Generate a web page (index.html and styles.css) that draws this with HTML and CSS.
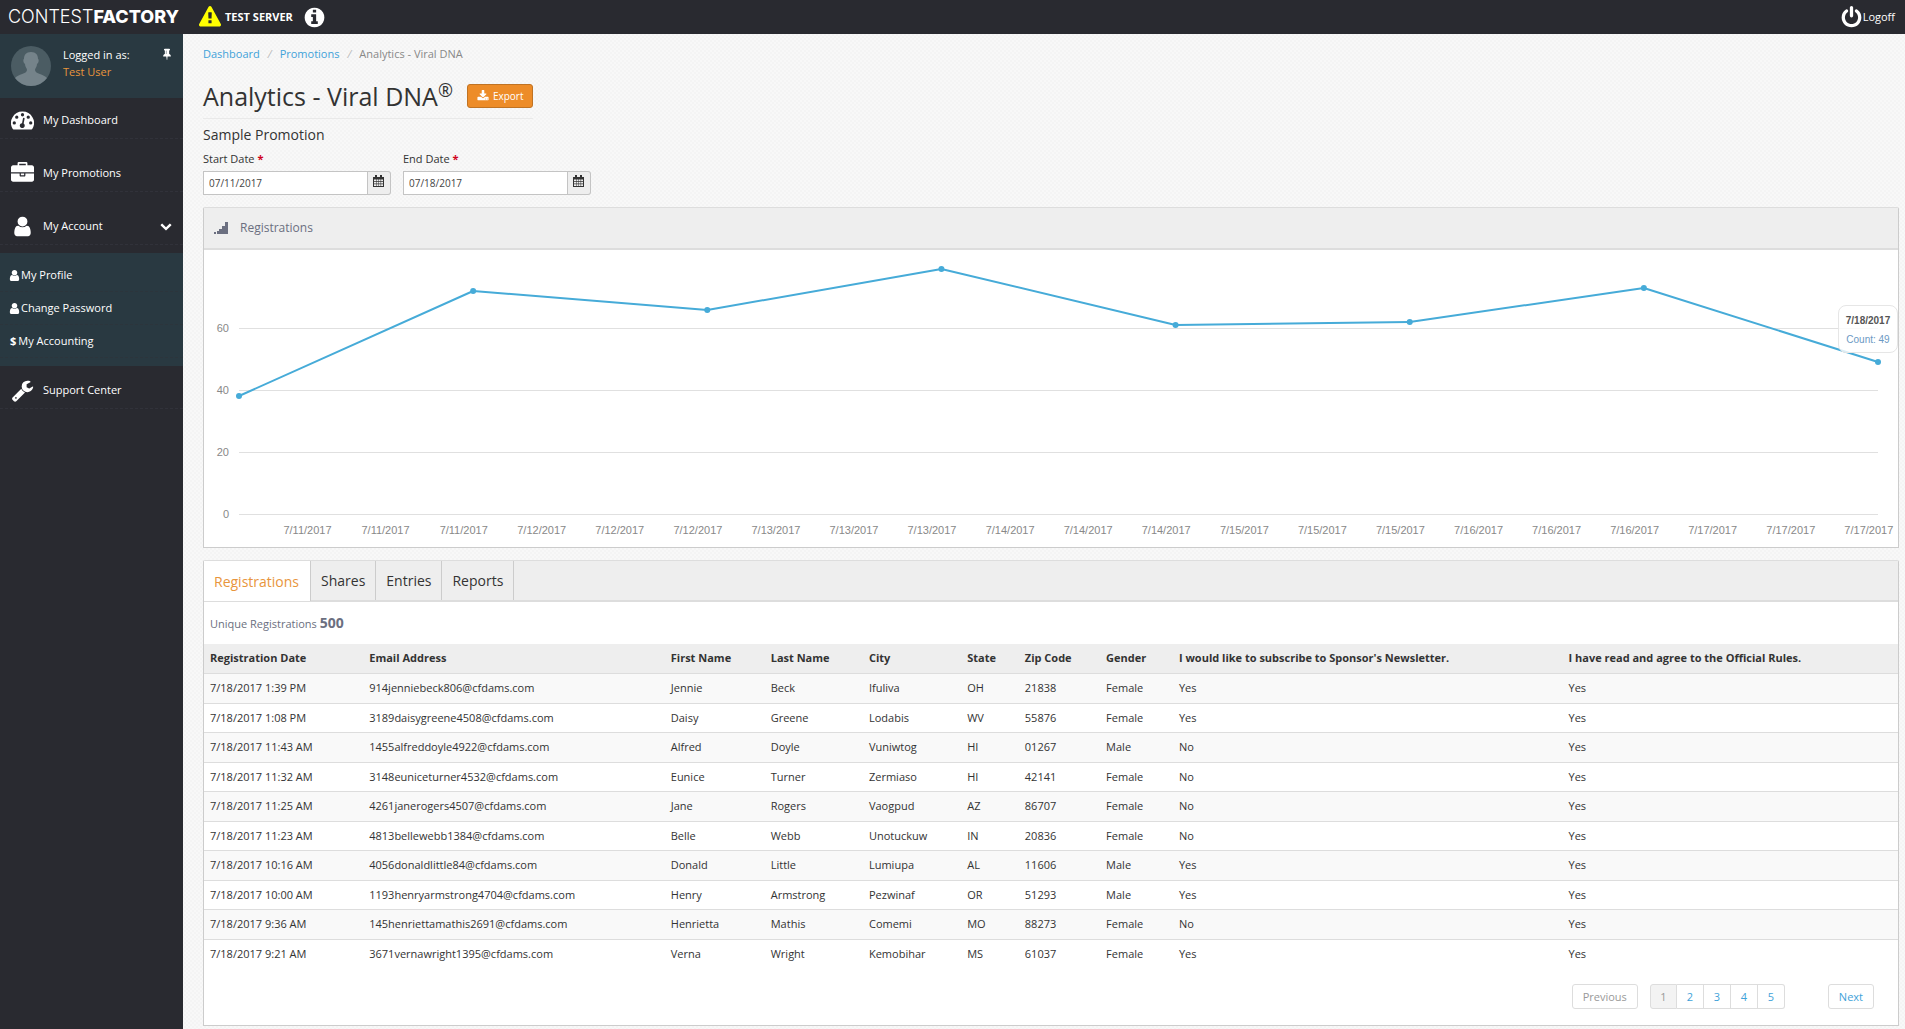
FILE: index.html
```html
<!doctype html>
<html lang="en">
<head>
  <meta charset="utf-8">
  <title>Analytics - Viral DNA</title>
  <link rel="stylesheet" href="styles.css">
</head>
<body>

  <!-- icon sprite -->
  <svg class="sprite" aria-hidden="true">
    <symbol id="i-warning" viewBox="0 0 1792 1792"><path d="M1024 1375v-190q0-14-9.500-23.500t-22.500-9.500h-192q-13 0-22.500 9.500t-9.500 23.500v190q0 14 9.500 23.500t22.500 9.500h192q13 0 22.500-9.500t9.500-23.500zm-2-374l18-459q0-12-10-19-13-11-24-11h-220q-11 0-24 11-10 7-10 21l17 457q0 10 10 16.500t24 6.500h185q14 0 23.500-6.500t10.500-16.500zm-14-934l768 1408q35 63-2 126-17 29-46.500 46t-63.500 17h-1536q-34 0-63.500-17t-46.500-46q-37-63-2-126l768-1408q17-31 47-49t65-18 65 18 47 49z"/></symbol>
    <symbol id="i-info" viewBox="0 0 1792 1792"><path d="M1152 1376v-160q0-14-9-23t-23-9h-96v-512q0-14-9-23t-23-9h-320q-14 0-23 9t-9 23v160q0 14 9 23t23 9h96v320h-96q-14 0-23 9t-9 23v160q0 14 9 23t23 9h448q14 0 23-9t9-23zm-128-896v-160q0-14-9-23t-23-9h-192q-14 0-23 9t-9 23v160q0 14 9 23t23 9h192q14 0 23-9t9-23zm640 416q0 209-103 385.500t-279.500 279.500-385.500 103-385.500-103-279.500-279.500-103-385.500 103-385.500 279.500-279.500 385.500-103 385.500 103 279.500 279.500 103 385.500z"/></symbol>
    <symbol id="i-power" viewBox="0 0 1792 1792"><path d="M1664 896q0 156-61 298t-164 245-245 164-298 61-298-61-245-164-164-245-61-298q0-182 80.500-343t226.500-270q43-32 95.500-25t83.500 50q32 42 24.500 94.500t-49.500 84.500q-98 74-151.500 181t-53.500 228q0 104 40.500 198.500t109.500 163.500 163.500 109.500 198.500 40.500 198.500-40.500 163.500-109.500 109.500-163.500 40.500-198.500q0-121-53.500-228t-151.500-181q-42-32-49.500-84.500t24.500-94.500q31-43 84-50t95 25q146 109 226.500 270t80.500 343zm-640-768v640q0 52-38 90t-90 38-90-38-38-90v-640q0-52 38-90t90-38 90 38 38 90z"/></symbol>
    <symbol id="i-pin" viewBox="0 0 1792 1792"><path d="M800 864v-448q0-14-9-23t-23-9-23 9-9 23v448q0 14 9 23t23 9 23-9 9-23zm672 352q0 26-19 45t-45 19h-429l-51 483q-2 12-10.500 20.500t-20.500 8.500h-1q-27 0-32-27l-76-485h-404q-26 0-45-19t-19-45q0-123 78.500-221.500t177.500-98.500v-512q-52 0-90-38t-38-90 38-90 90-38h640q52 0 90 38t38 90-38 90-90 38v512q99 0 177.500 98.500t78.500 221.500z"/></symbol>
    <symbol id="i-dashboard" viewBox="0 0 1792 1792"><path fill-rule="evenodd" d="M896 192a896 896 0 0 1 758 1374q-20 34-58 34H196q-38 0-58-34A896 896 0 0 1 896 192zM256 960a128 128 0 1 0 0 256 128 128 0 0 0 0-256zM448 512a128 128 0 1 0 0 256 128 128 0 0 0 0-256zM896 320a128 128 0 1 0 0 256 128 128 0 0 0 0-256zM1344 512a128 128 0 1 0 0 256 128 128 0 0 0 0-256zM1536 960a128 128 0 1 0 0 256 128 128 0 0 0 0-256zM935 721l-75 382a193 193 0 1 0 124 32l75-382q4-60-52-70-58-6-72 38z"/></symbol>
    <symbol id="i-briefcase" viewBox="0 0 1792 1792"><path d="M640 256h512v-128h-512v128zm1152 640v480q0 66-47 113t-113 47h-1472q-66 0-113-47t-47-113v-480h672v160q0 26 19 45t45 19h320q26 0 45-19t19-45v-160h672zm-768 0v128h-256v-128h256zm768-480v384h-1792v-384q0-66 47-113t113-47h352v-160q0-40 28-68t68-28h576q40 0 68 28t28 68v160h352q66 0 113 47t47 113z"/></symbol>
    <symbol id="i-user" viewBox="0 0 1792 1792"><path d="M1536 1399q0 109-62.500 187t-150.500 78h-854q-88 0-150.500-78t-62.500-187q0-85 8.500-160.500t31.500-152 58.500-131 94-89 134.500-34.500q131 128 313 128t313-128q76 0 134.500 34.500t94 89 58.500 131 31.500 152 8.500 160.500zm-256-887q0 159-112.500 271.500t-271.500 112.500-271.500-112.500-112.500-271.500 112.500-271.500 271.500-112.500 271.500 112.500 112.500 271.500z"/></symbol>
    <symbol id="i-wrench" viewBox="0 0 1792 1792"><path d="M448 1472q0-26-19-45t-45-19-45 19-19 45 19 45 45 19 45-19 19-45zm644-420l-682 682q-37 37-90 37-52 0-91-37l-106-108q-38-36-38-90 0-53 38-91l681-681q39 98 114.500 173.500t173.500 114.500zm634-435q0 39-23 106-47 134-164.500 217.500t-258.500 83.500q-185 0-316.500-131.500t-131.500-316.500 131.500-316.500 316.500-131.500q58 0 121.500 16.500t107.500 46.500q16 11 16 28t-16 28l-293 169v224l193 107q5-3 79-48.500t135.500-81 70.500-35.500q15 0 23.500 10t8.500 25z"/></symbol>
    <symbol id="i-chevron" viewBox="0 0 1792 1792"><path d="M1683 808l-742 741q-19 19-45 19t-45-19l-742-741q-19-19-19-45.500t19-45.500l166-165q19-19 45-19t45 19l531 531 531-531q19-19 45-19t45 19l166 165q19 19 19 45.500t-19 45.500z"/></symbol>
    <symbol id="i-download" viewBox="0 0 1792 1792"><path d="M1344 1344q0-26-19-45t-45-19-45 19-19 45 19 45 45 19 45-19 19-45zm256 0q0-26-19-45t-45-19-45 19-19 45 19 45 45 19 45-19 19-45zm128-224v320q0 40-28 68t-68 28h-1472q-40 0-68-28t-28-68v-320q0-40 28-68t68-28h465l135 136q58 56 136 56t136-56l136-136h464q40 0 68 28t28 68zm-325-569q17 41-14 70l-448 448q-18 19-45 19t-45-19l-448-448q-31-29-14-70 17-39 59-39h256v-448q0-26 19-45t45-19h256q26 0 45 19t19 45v448h256q42 0 59 39z"/></symbol>
    <symbol id="i-calendar" viewBox="0 0 11 12"><path fill-rule="evenodd" d="M0 2h11v10H0zM1 4.500v1.500h2v-1.500zM3.500 4.500v1.500h1.800v-1.500zM5.800 4.500v1.500h1.800v-1.500zM8.100 4.500v1.500h1.900v-1.500zM1 6.700v1.800h2v-1.800zM3.500 6.700v1.800h1.800v-1.800zM5.800 6.700v1.800h1.800v-1.800zM8.100 6.700v1.800h1.900v-1.800zM1 9.200v1.800h2v-1.800zM3.500 9.200v1.800h1.800v-1.800zM5.800 9.200v1.800h1.800v-1.800zM8.100 9.200v1.800h1.900v-1.800z"/><path d="M2 0h2v3H2zM7 0h2v3H7z"/></symbol>
    <symbol id="i-signal" viewBox="0 0 14 12"><path d="M0 10h2v2H0zM3 9h2v3H3zM5 7h3v5H5zM8 4h3v8H8zM11 0h3v12h-3z"/></symbol>
  </svg>

  <header class="topbar">
    <a href="#" class="logo"><span>CONTEST</span><b>FACTORY</b></a>
    <div class="server">
      <svg class="icon-md warning"><use href="#i-warning"/></svg>
      <strong>TEST SERVER</strong>
      <svg class="icon-lg"><use href="#i-info"/></svg>
    </div>
    <a href="#" class="logoff"><svg class="icon-lg"><use href="#i-power"/></svg>Logoff</a>
  </header>

  <div class="layout">
    <nav class="sidebar">
      <div class="userbox">
        <svg class="avatar" viewBox="0 0 40 40">
          <circle cx="20" cy="20" r="20" fill="#4b5c63"/>
          <path fill="#75838a" d="M20 6c5 0 7 3 7 7 1 0 1 4-1 5 0 3-2 4-2 6 0 4 9 4 12 8a20 20 0 0 1-32 0c3-4 12-4 12-8 0-2-2-3-2-6-2-1-2-5-1-5 0-4 2-7 7-7z"/>
        </svg>
        <div class="who">
          <div>Logged in as:</div>
          <a href="#">Test User</a>
        </div>
        <svg class="pin"><use href="#i-pin"/></svg>
      </div>
      <ul class="menu">
        <li><a href="#"><svg class="icon-lg"><use href="#i-dashboard"/></svg>My Dashboard</a></li>
        <li><a href="#"><svg class="icon-lg"><use href="#i-briefcase"/></svg>My Promotions</a></li>
        <li><a href="#"><svg class="icon-lg"><use href="#i-user"/></svg>My Account<svg class="chevron"><use href="#i-chevron"/></svg></a></li>
      </ul>
      <ul class="submenu">
        <li><a href="#"><svg class="icon-sm"><use href="#i-user"/></svg>My Profile</a></li>
        <li><a href="#"><svg class="icon-sm"><use href="#i-user"/></svg>Change Password</a></li>
        <li><a href="#"><b>$</b>My Accounting</a></li>
      </ul>
      <ul class="menu support">
        <li><a href="#"><svg class="icon-lg"><use href="#i-wrench"/></svg>Support Center</a></li>
      </ul>
    </nav>

    <main class="content">
      <div class="breadcrumb">
        <a href="#">Dashboard</a><i>/</i><a href="#">Promotions</a><i>/</i><span>Analytics - Viral DNA</span>
      </div>

      <div class="title">
        <h1>Analytics - Viral DNA<sup>®</sup></h1>
        <button type="button" class="export"><svg><use href="#i-download"/></svg>Export</button>
      </div>
      <h2>Sample Promotion</h2>

      <form class="dates">
        <div class="field">
          <label for="start">Start Date <em>*</em></label>
          <div class="picker">
            <input type="text" id="start" value="07/11/2017">
            <button type="button" aria-label="Pick start date"><svg><use href="#i-calendar"/></svg></button>
          </div>
        </div>
        <div class="field">
          <label for="end">End Date <em>*</em></label>
          <div class="picker">
            <input type="text" id="end" value="07/18/2017">
            <button type="button" aria-label="Pick end date"><svg><use href="#i-calendar"/></svg></button>
          </div>
        </div>
      </form>

      <section class="panel chart">
        <div class="panel-head"><svg><use href="#i-signal"/></svg>Registrations</div>
        <div class="plot">
          <!-- y = 264 - value * 3.1 -->
          <svg class="graph">
            <g class="grid">
              <line x1="0" x2="100%" y1="78" y2="78"/>
              <line x1="0" x2="100%" y1="140" y2="140"/>
              <line x1="0" x2="100%" y1="202" y2="202"/>
              <line x1="0" x2="100%" y1="264" y2="264"/>
            </g>
            <g class="ylabels">
              <text x="-10" y="82">60</text>
              <text x="-10" y="144">40</text>
              <text x="-10" y="206">20</text>
              <text x="-10" y="268">0</text>
            </g>
            <g class="xlabels">
              <text x="4.18%" y="284">7/11/2017</text>
              <text x="8.94%" y="284">7/11/2017</text>
              <text x="13.71%" y="284">7/11/2017</text>
              <text x="18.47%" y="284">7/12/2017</text>
              <text x="23.23%" y="284">7/12/2017</text>
              <text x="28%" y="284">7/12/2017</text>
              <text x="32.76%" y="284">7/13/2017</text>
              <text x="37.52%" y="284">7/13/2017</text>
              <text x="42.28%" y="284">7/13/2017</text>
              <text x="47.05%" y="284">7/14/2017</text>
              <text x="51.81%" y="284">7/14/2017</text>
              <text x="56.57%" y="284">7/14/2017</text>
              <text x="61.34%" y="284">7/15/2017</text>
              <text x="66.1%" y="284">7/15/2017</text>
              <text x="70.86%" y="284">7/15/2017</text>
              <text x="75.63%" y="284">7/16/2017</text>
              <text x="80.39%" y="284">7/16/2017</text>
              <text x="85.15%" y="284">7/16/2017</text>
              <text x="89.91%" y="284">7/17/2017</text>
              <text x="94.68%" y="284">7/17/2017</text>
              <text x="99.44%" y="284">7/17/2017</text>
            </g>
            <g class="series">
              <line x1="0" y1="146" x2="14.286%" y2="41"/>
              <line x1="14.286%" y1="41" x2="28.571%" y2="60"/>
              <line x1="28.571%" y1="60" x2="42.857%" y2="19"/>
              <line x1="42.857%" y1="19" x2="57.143%" y2="75"/>
              <line x1="57.143%" y1="75" x2="71.429%" y2="72"/>
              <line x1="71.429%" y1="72" x2="85.714%" y2="38"/>
              <line x1="85.714%" y1="38" x2="100%" y2="112"/>
            </g>
            <g class="dots">
              <circle cx="0" cy="146" r="3"/>
              <circle cx="14.286%" cy="41" r="3"/>
              <circle cx="28.571%" cy="60" r="3"/>
              <circle cx="42.857%" cy="19" r="3"/>
              <circle cx="57.143%" cy="75" r="3"/>
              <circle cx="71.429%" cy="72" r="3"/>
              <circle cx="85.714%" cy="38" r="3"/>
              <circle cx="100%" cy="112" r="3"/>
            </g>
          </svg>
          <div class="tooltip"><b>7/18/2017</b><span>Count: 49</span></div>
        </div>
      </section>

      <section class="panel">
        <div class="tabs" role="tablist">
          <button type="button" role="tab" class="active" aria-selected="true">Registrations</button>
          <button type="button" role="tab">Shares</button>
          <button type="button" role="tab">Entries</button>
          <button type="button" role="tab">Reports</button>
        </div>
        <p class="unique">Unique Registrations <b>500</b></p>
        <table>
          <colgroup>
            <col class="c-date"><col class="c-email"><col class="c-first"><col class="c-last"><col class="c-city"><col class="c-state"><col class="c-zip"><col class="c-gender"><col class="c-news"><col class="c-rules">
          </colgroup>
          <thead>
            <tr><th>Registration Date</th><th>Email Address</th><th>First Name</th><th>Last Name</th><th>City</th><th>State</th><th>Zip Code</th><th>Gender</th><th>I would like to subscribe to Sponsor's Newsletter.</th><th>I have read and agree to the Official Rules.</th></tr>
          </thead>
          <tbody>
            <tr><td>7/18/2017 1:39 PM</td><td>914jenniebeck806@cfdams.com</td><td>Jennie</td><td>Beck</td><td>Ifuliva</td><td>OH</td><td>21838</td><td>Female</td><td>Yes</td><td>Yes</td></tr>
            <tr><td>7/18/2017 1:08 PM</td><td>3189daisygreene4508@cfdams.com</td><td>Daisy</td><td>Greene</td><td>Lodabis</td><td>WV</td><td>55876</td><td>Female</td><td>Yes</td><td>Yes</td></tr>
            <tr><td>7/18/2017 11:43 AM</td><td>1455alfreddoyle4922@cfdams.com</td><td>Alfred</td><td>Doyle</td><td>Vuniwtog</td><td>HI</td><td>01267</td><td>Male</td><td>No</td><td>Yes</td></tr>
            <tr><td>7/18/2017 11:32 AM</td><td>3148euniceturner4532@cfdams.com</td><td>Eunice</td><td>Turner</td><td>Zermiaso</td><td>HI</td><td>42141</td><td>Female</td><td>No</td><td>Yes</td></tr>
            <tr><td>7/18/2017 11:25 AM</td><td>4261janerogers4507@cfdams.com</td><td>Jane</td><td>Rogers</td><td>Vaogpud</td><td>AZ</td><td>86707</td><td>Female</td><td>No</td><td>Yes</td></tr>
            <tr><td>7/18/2017 11:23 AM</td><td>4813bellewebb1384@cfdams.com</td><td>Belle</td><td>Webb</td><td>Unotuckuw</td><td>IN</td><td>20836</td><td>Female</td><td>No</td><td>Yes</td></tr>
            <tr><td>7/18/2017 10:16 AM</td><td>4056donaldlittle84@cfdams.com</td><td>Donald</td><td>Little</td><td>Lumiupa</td><td>AL</td><td>11606</td><td>Male</td><td>Yes</td><td>Yes</td></tr>
            <tr><td>7/18/2017 10:00 AM</td><td>1193henryarmstrong4704@cfdams.com</td><td>Henry</td><td>Armstrong</td><td>Pezwinaf</td><td>OR</td><td>51293</td><td>Male</td><td>Yes</td><td>Yes</td></tr>
            <tr><td>7/18/2017 9:36 AM</td><td>145henriettamathis2691@cfdams.com</td><td>Henrietta</td><td>Mathis</td><td>Comemi</td><td>MO</td><td>88273</td><td>Female</td><td>No</td><td>Yes</td></tr>
            <tr><td>7/18/2017 9:21 AM</td><td>3671vernawright1395@cfdams.com</td><td>Verna</td><td>Wright</td><td>Kemobihar</td><td>MS</td><td>61037</td><td>Female</td><td>Yes</td><td>Yes</td></tr>
          </tbody>
        </table>
        <div class="pager">
          <button type="button" disabled>Previous</button>
          <div class="pages">
            <button type="button" class="current">1</button>
            <button type="button">2</button>
            <button type="button">3</button>
            <button type="button">4</button>
            <button type="button">5</button>
          </div>
          <button type="button">Next</button>
        </div>
      </section>
    </main>
  </div>

</body>
</html>
```
FILE: styles.css
```css
*{
  box-sizing: border-box;
}
body{
  margin: 0;
  min-height: 100vh;
  display: flex;
  flex-direction: column;
  font-family: "Open Sans", sans-serif;
  font-size: 11px;
  line-height: 16px;
  color: #333;
  background: repeating-conic-gradient(#f4f4f4 0 25%, #f8f8f8 0 50%) 0 0 / 4px 4px;
}
a{
  color: #3fa2d9;
  text-decoration: none;
}
button, input{
  font-family: inherit;
  font-size: 11px;
  margin: 0;
}
button{
  cursor: pointer;
}
ul{
  list-style: none;
  margin: 0;
  padding: 0;
}
svg{
  flex: none;
  fill: currentColor;
}
.sprite{
  position: absolute;
  width: 0;
  height: 0;
}
.icon-sm{
  width: 13px;
  height: 13px;
}
.icon-md{
  width: 22px;
  height: 22px;
}
.icon-lg{
  width: 23px;
  height: 23px;
}

/* top bar */
.topbar{
  display: flex;
  align-items: center;
  height: 34px;
  padding-right: 10px;
  background: #292a30;
  color: #fff;
}
.logo{
  width: 199px;
  padding-left: 8px;
  color: #fff;
  font-family: Inter, sans-serif;
  font-size: 18px;
  font-weight: 300;
  line-height: 30px;
}
.logo b{
  font-weight: 800;
}
.server{
  display: flex;
  align-items: center;
  gap: 4px;
}
.server strong{
  margin-right: 6px;
}
.warning{
  color: #ff0;
}
.logoff{
  display: flex;
  align-items: center;
  margin-left: auto;
  color: #fff;
}

.layout{
  flex: 1;
  display: flex;
}

/* sidebar */
.sidebar{
  flex: none;
  width: 183px;
  background: #292a30;
}
.sidebar a{
  color: #fff;
}
.userbox{
  display: flex;
  height: 64px;
  padding: 12px 10px 0 11px;
  background: #293941;
  color: #fff;
}
.avatar{
  width: 40px;
  height: 40px;
}
.who{
  margin-left: 12px;
  line-height: 17px;
}
.sidebar .who a{
  color: #e8953c;
}
.pin{
  width: 12px;
  height: 12px;
  margin: 2px 0 0 auto;
}
.menu li{
  margin-bottom: 12px;
  border-bottom: 1px dashed #31323a;
}
.menu li:last-child{
  margin-bottom: 8px;
}
.menu a{
  display: flex;
  align-items: center;
  gap: 9px;
  height: 40px;
  padding: 4px 11px 0;
}
.chevron{
  width: 12px;
  height: 12px;
  margin-left: auto;
}
.submenu{
  padding: 6px 0 8px;
  background: #293941;
}
.submenu a{
  display: flex;
  align-items: center;
  height: 33px;
  padding: 0 8px;
  border-bottom: 1px dashed #2c353c;
}
.submenu b{
  margin: 0 2px;
}
.support{
  padding-top: 2px;
}

/* content */
.content{
  flex: 1;
  min-width: 0;
  padding: 12px 6px 3px 20px;
}
.breadcrumb{
  color: #888;
}
.breadcrumb i{
  margin: 0 8px;
  color: #bbb;
}
.title{
  display: inline-flex;
  align-items: center;
  gap: 14px;
  height: 45px;
  margin-top: 12px;
  border-bottom: 1px solid #e9e9e9;
}
h1{
  margin: 0;
  font-size: 25px;
  font-weight: 400;
  line-height: 34px;
}
h1 sup{
  font-size: 18px;
  line-height: 0;
}
.export{
  display: flex;
  align-items: center;
  gap: 4px;
  height: 24px;
  padding: 0 9px;
  border: 1px solid #c07323;
  border-radius: 3px;
  background: #ed8c28;
  color: #fff;
  font-size: 10px;
}
.export svg{
  width: 12px;
  height: 12px;
}
h2{
  margin: 6px 0;
  font-size: 14px;
  font-weight: 400;
  line-height: 20px;
}
.dates{
  display: flex;
  gap: 12px;
  margin-bottom: 12px;
}
.field label{
  display: block;
  margin-bottom: 4px;
}
.field em{
  color: #d0021b;
  font-style: normal;
  font-weight: 700;
}
.picker{
  display: flex;
  width: 188px;
  height: 24px;
}
.picker input{
  flex: 1;
  min-width: 0;
  padding: 0 5px;
  border: 1px solid #c4c4c4;
  background: #fff;
  color: #444;
  font-size: 10px;
}
.picker button{
  width: 23px;
  padding: 0 2px 2px 0;
  border: 1px solid #c4c4c4;
  border-left: 0;
  border-radius: 0 3px 3px 0;
  background: #eee;
  color: #333;
}
.picker svg{
  width: 11px;
  height: 12px;
}

.panel{
  border: 1px solid #ccc;
  border-top-color: #ddd;
  border-radius: 2px 2px 0 0;
  background: #fff;
}
.chart{
  margin-bottom: 12px;
}
.panel-head{
  display: flex;
  align-items: center;
  gap: 12px;
  height: 42px;
  padding: 0 10px;
  border-bottom: 2px solid #ddd;
  background: #eee;
  color: #6b6f80;
  font-size: 12px;
}
.panel-head svg{
  width: 14px;
  height: 12px;
}
.plot{
  position: relative;
  height: 297px;
  padding: 0 20px 0 35px;
}
.graph{
  display: block;
  width: 100%;
  height: 297px;
  overflow: visible;
}
.grid line{
  stroke: #e0e0e0;
  shape-rendering: crispEdges;
}
.graph text{
  fill: #888;
  font-family: "Liberation Sans", sans-serif;
  font-size: 11px;
}
.ylabels{
  text-anchor: end;
}
.xlabels{
  text-anchor: middle;
}
.series line{
  stroke: #46abd8;
  stroke-width: 2px;
  stroke-linecap: round;
}
.dots circle{
  fill: #46abd8;
}
.tooltip{
  position: absolute;
  top: 55px;
  right: 0;
  width: 60px;
  height: 48px;
  padding-top: 5px;
  border: 1px solid #e6e6e6;
  border-radius: 8px;
  background: rgba(255, 255, 255, 0.8);
  color: #6b99c4;
  font-family: "Liberation Sans", sans-serif;
  font-size: 10px;
  line-height: 19px;
  text-align: center;
}
.tooltip b{
  display: block;
  color: #555;
}

/* tabs */
.tabs{
  display: flex;
  height: 41px;
  border-bottom: 2px solid #ddd;
  background: #eee;
}
.tabs button{
  padding: 0 10px;
  border: 0;
  border-right: 1px solid #ccc;
  background: none;
  color: #333;
  font-size: 14px;
}
.tabs .active{
  height: 40px;
  padding: 0 11px 0 10px;
  background: #fff;
  color: #e8953c;
}
.unique{
  margin: 0;
  padding: 11px 6px;
  color: #6b6f80;
  line-height: 19px;
}
.unique b{
  font-size: 14px;
}

table{
  width: 100%;
  table-layout: fixed;
  border-collapse: collapse;
}
.c-date{width: 9.4%;}
.c-email{width: 17.8%;}
.c-first{width: 5.9%;}
.c-last{width: 5.8%;}
.c-city{width: 5.8%;}
.c-state{width: 3.4%;}
.c-zip{width: 4.8%;}
.c-gender{width: 4.3%;}
.c-news{width: 23%;}
.c-rules{width: 19.8%;}
th, td{
  height: 30px;
  padding: 0 6px;
  border-bottom: 1px solid #ddd;
  text-align: left;
  white-space: nowrap;
}
th{
  height: 29px;
  background: #eee;
}
tbody tr:nth-child(odd){
  background: #f9f9f9;
}
tbody tr:nth-child(even) td{
  height: 29px;
}
tbody tr:last-child td{
  border-bottom: 0;
}

/* pager */
.pager{
  display: flex;
  justify-content: flex-end;
  padding: 16px 24px 16px;
}
.pager button{
  height: 25px;
  padding: 0 10px;
  border: 1px solid #ddd;
  border-radius: 3px;
  background: #fff;
  color: #3fa2d9;
}
.pager button:disabled{
  color: #999;
}
.pages{
  display: flex;
  margin: 0 43px 0 12px;
}
.pager .pages button{
  width: 27px;
  padding: 0;
  border-radius: 0;
}
.pages button + button{
  border-left: 0;
}
.pager .pages button:first-child{
  border-radius: 3px 0 0 3px;
}
.pager .pages button:last-child{
  border-radius: 0 3px 3px 0;
}
.pager .pages .current{
  background: #f3f3f3;
  color: #999;
}
```
